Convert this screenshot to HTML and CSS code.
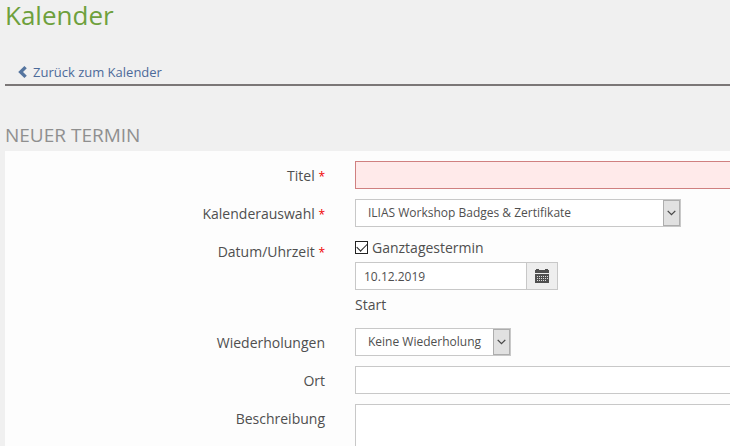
FILE: index.html
```html
<!DOCTYPE html>
<html lang="de">
<head>
<meta charset="utf-8">
<meta name="viewport" content="width=device-width, initial-scale=1">
<title>Kalender</title>
<link rel="stylesheet" href="styles.css">
</head>
<body>
<header>
  <h1 class="page-title">Kalender</h1>
  <nav class="back-bar">
    <a class="back-link" href="#kalender">
      <svg class="back-icon" viewBox="0 0 9 12" aria-hidden="true"><path d="M6.4 0 8.8 2.2 5 6 8.8 9.8 6.4 12 .2 6z"/></svg>
      <span>Zurück zum Kalender</span>
    </a>
  </nav>
</header>
<main>
  <h2 class="section-title">Neuer Termin</h2>
  <form class="panel">
    <div class="row">
      <label class="label" for="titel">Titel <span class="required">*</span></label>
      <input class="field field-wide field-error" id="titel" type="text">
    </div>
    <div class="row">
      <label class="label" for="auswahl">Kalenderauswahl <span class="required">*</span></label>
      <div class="select select-long">
        <select class="field" id="auswahl"><option>ILIAS Workshop Badges &amp; Zertifikate</option></select>
        <span class="arrow"><svg viewBox="0 0 9 6" aria-hidden="true"><path d="M.7.9 4.5 4.7 8.3.9"/></svg></span>
      </div>
    </div>
    <div class="row">
      <label class="label" for="datum">Datum/Uhrzeit <span class="required">*</span></label>
      <div class="date-group">
        <label class="check"><input class="checkbox" type="checkbox" checked>Ganztagestermin</label>
        <div class="date">
          <input class="field" id="datum" type="text" value="10.12.2019">
          <button class="date-button" type="button" aria-label="Datum wählen">
            <svg viewBox="0 0 14 14" aria-hidden="true">
              <path d="M0 1h1V0h3v1h6V0h3v1h1v3H0zM0 5h14v9H0z"/>
              <path class="dots" d="M2 7h1v1H2zM4 7h1v1H4zM6 7h1v1H6zM8 7h1v1H8zM10 7h1v1h-1zM12 7h1v1h-1zM2 9h1v1H2zM4 9h1v1H4zM6 9h1v1H6zM8 9h1v1H8zM10 9h1v1h-1zM12 9h1v1h-1zM2 11h1v1H2zM4 11h1v1H4zM6 11h1v1H6zM8 11h1v1H8zM10 11h1v1h-1z"/>
            </svg>
          </button>
        </div>
        <span class="caption">Start</span>
      </div>
    </div>
    <div class="row">
      <label class="label" for="wiederholung">Wiederholungen</label>
      <div class="select select-short">
        <select class="field" id="wiederholung"><option>Keine Wiederholung</option></select>
        <span class="arrow"><svg viewBox="0 0 9 6" aria-hidden="true"><path d="M.7.9 4.5 4.7 8.3.9"/></svg></span>
      </div>
    </div>
    <div class="row">
      <label class="label" for="ort">Ort</label>
      <input class="field field-wide" id="ort" type="text">
    </div>
    <div class="row">
      <label class="label" for="beschreibung">Beschreibung</label>
      <textarea class="field field-wide field-area" id="beschreibung"></textarea>
    </div>
  </form>
</main>
</body>
</html>
```
FILE: styles.css
```css
* { box-sizing: border-box; }

html { scrollbar-width: none; }

body {
  margin: 0;
  padding-left: 5px;
  background: #f0f0f0;
  color: #4f4f4f;
  font: 14px/20px "Open Sans", sans-serif;
}

.page-title {
  margin: 0;
  color: #6ea03c;
  font-size: 26px;
  font-weight: 400;
  line-height: 30px;
}

.back-bar {
  display: flex;
  margin-top: 32px;
  padding: 0 13px 2px;
  border-bottom: 2px solid #7b7777;
}

.back-link {
  display: flex;
  align-items: center;
  gap: 6px;
  color: #4c6a9a;
  font-size: 13px;
  text-decoration: none;
}

.back-icon {
  width: 9px;
  height: 12px;
  fill: #55759f;
}

.section-title {
  margin: 37px 0 3px;
  color: #8f8f8f;
  font-size: 19px;
  font-weight: 400;
  line-height: 25px;
  text-transform: uppercase;
}

.panel {
  display: grid;
  gap: 10px;
  padding: 10px 0;
  background: #fdfdfd;
}

.row {
  display: grid;
  grid-template-columns: 320px minmax(0, 1fr);
  column-gap: 30px;
  align-items: start;
}

.label {
  padding-top: 5px;
  text-align: right;
}

.required {
  color: #f00000;
  font-size: 12px;
}

.field {
  width: 100%;
  height: 28px;
  margin: 0;
  padding: 0 8px;
  border: 1px solid #c8c8c8;
  border-radius: 0;
  background: #fff;
  color: #4f4f4f;
  font: 12px/18px "Open Sans", sans-serif;
  appearance: none;
}

.field-wide { border-right: 0; }

.field-error {
  border-color: #d08080;
  background: #ffeaea;
}

.field-area {
  display: block;
  height: 80px;
  resize: none;
}

.select { display: grid; }
.select-long { width: 326px; }
.select-short { width: 156px; }

.select .field,
.arrow { grid-area: 1 / 1; }

.select .field { padding: 0 24px 0 12px; }

.arrow {
  display: flex;
  align-items: center;
  justify-content: center;
  justify-self: end;
  width: 17px;
  margin: 1px;
  border: 1px solid #adadad;
  background: #e1e1e1;
  pointer-events: none;
}

.arrow svg {
  width: 9px;
  height: 6px;
  fill: none;
  stroke: #484848;
  stroke-width: 1.3;
}

.date-group {
  display: grid;
  gap: 4px;
  padding-bottom: 2px;
}

.check {
  display: flex;
  align-items: center;
  gap: 4px;
  line-height: 21px;
}

.checkbox {
  display: grid;
  place-items: center;
  width: 13px;
  height: 13px;
  margin: 0;
  border: 1px solid #222;
  background: #fff;
  appearance: none;
}

.checkbox:checked::before {
  width: 9px;
  height: 5px;
  margin-bottom: 3px;
  border: solid #222;
  border-width: 0 0 1px 1px;
  content: "";
  transform: rotate(-45deg);
}

.date {
  display: grid;
  grid-template-columns: 172px 31px;
}

.date-button {
  display: grid;
  place-items: center;
  padding: 0;
  border: 1px solid #c8c8c8;
  border-left: 0;
  background: #eee;
}

.date-button svg {
  width: 14px;
  height: 14px;
  fill: #505050;
}

.date-button .dots { fill: #ddd; }

.caption { line-height: 22px; }
```
